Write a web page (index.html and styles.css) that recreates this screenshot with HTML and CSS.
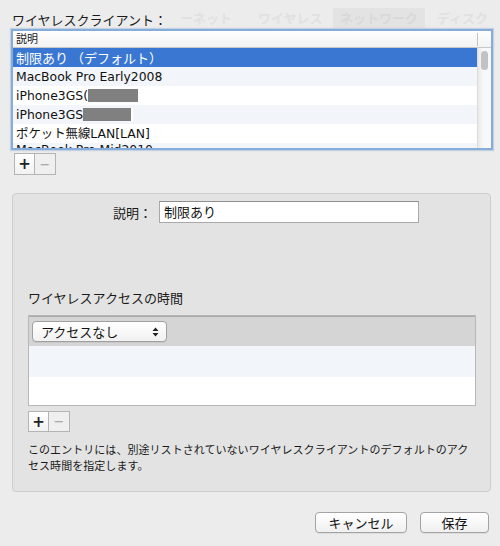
FILE: index.html
```html
<!DOCTYPE html>
<html lang="ja">
<head>
<meta charset="utf-8">
<link rel="stylesheet" href="styles.css">
</head>
<body>
<div class="ghost" aria-hidden="true">
  <div class="ghost-tabs">
    <span class="gt gt1">ーネット</span>
    <span class="gt gt2">ワイヤレス</span>
    <span class="gt gt3">ネットワーク</span>
    <span class="gt gt4">ディスク</span>
  </div>
</div>
<div class="sheet">
  <div class="title">ワイヤレスクライアント：</div>
  <div class="list">
    <div class="list-head">
      <span class="head-cell">説明</span>
      <span class="head-corner"></span>
    </div>
    <div class="list-body">
      <div class="rows">
        <div class="row sel">制限あり （デフォルト）</div>
        <div class="row alt">MacBook Pro Early2008</div>
        <div class="row">iPhone3GS(<span class="mask m1"></span></div>
        <div class="row alt">iPhone3GS<span class="mask m2"></span></div>
        <div class="row">ポケット無線LAN[LAN]</div>
        <div class="row alt cut">MacBook Pro Mid2010</div>
      </div>
      <div class="scroll"><div class="thumb"></div></div>
    </div>
  </div>
  <div class="pm pm-top">
    <span class="pmb plus">+</span><span class="pmb minus">−</span>
  </div>

  <div class="group">
    <div class="field-row">
      <span class="field-label">説明：</span>
      <span class="field">制限あり</span>
    </div>
    <div class="section-label">ワイヤレスアクセスの時間</div>
    <div class="table">
      <div class="table-head">
        <span class="popup">アクセスなし
          <svg class="arrows" width="7" height="10" viewBox="0 0 7 10"><path d="M3.5 0.5 L6.5 4 L0.5 4 Z M0.5 6 L6.5 6 L3.5 9.5 Z" fill="#222"/></svg>
        </span>
      </div>
      <div class="trow alt"></div>
      <div class="trow"></div>
    </div>
    <div class="pm pm-group">
      <span class="pmb plus">+</span><span class="pmb minus">−</span>
    </div>
    <p class="note">このエントリには、別途リストされていないワイヤレスクライアントのデフォルトのアク<br>セス時間を指定します。</p>
  </div>

  <div class="actions">
    <span class="btn cancel">キャンセル</span>
    <span class="btn save">保存</span>
  </div>
</div>
</body>
</html>
```
FILE: styles.css
```css
* { box-sizing: border-box; }
html, body { margin: 0; padding: 0; }
body {
  width: 500px;
  height: 546px;
  background: #ececec;
  font-family: "DejaVu Sans", "Noto Sans CJK JP", sans-serif;
  font-size: 13px;
  color: #111;
  position: relative;
  overflow: hidden;
}

/* faint window beneath the sheet */
.ghost {
  position: absolute;
  left: 0; top: 0;
  width: 500px;
  height: 546px;
  z-index: 0;
}
.ghost-tabs {
  display: flex;
  padding: 8px 0 0 180px;
  font-family: "Noto Sans CJK JP", sans-serif;
  font-size: 13px;
  font-weight: bold;
  color: #e1e1e1;
}
.gt { height: 20px; line-height: 20px; white-space: nowrap; }
.gt1 { width: 78px; }
.gt2 { width: 75px; }
.gt3 { width: 92px; background: #e3e3e3; text-align: center; color: #d9d9d9; }
.gt4 { padding-left: 12px; }

.sheet {
  position: relative;
  z-index: 1;
  padding: 11px 0 0 11px;
  width: 500px;
}
.title {
  font-family: "Noto Sans CJK JP", sans-serif;
  font-size: 13px;
  line-height: 18px;
  height: 18px;
  padding-left: 1px;
  color: #1a1a1a;
  width: 160px;
}

.list {
  width: 482px;
  height: 121px;
  border: 2px solid #86acd9;
  background: #fff;
  display: flex;
  flex-direction: column;
  overflow: hidden;
  box-shadow: 0 0 1px 1px rgba(120,160,210,0.35);
}
.list-head {
  height: 17px;
  flex: none;
  display: flex;
  background: linear-gradient(#ffffff, #f3f3f3);
  border-bottom: 1px solid #c9c9c9;
  font-family: "Noto Sans CJK JP", sans-serif;
  font-size: 11px;
  line-height: 15px;
}
.head-cell { flex: 1; padding-left: 3px; color: #222; }
.head-corner { width: 14px; border-left: 1px solid #c4c4c4; margin: 2px 0 1px; }
.list-body { flex: 1; display: flex; overflow: hidden; }
.rows { flex: 1; overflow: hidden; }
.row {
  height: 19px;
  line-height: 19px;
  padding-left: 3px;
  font-family: "DejaVu Sans", "Noto Sans CJK JP", sans-serif;
  font-size: 12.4px;
  white-space: nowrap;
  display: flex;
  align-items: center;
}
.row.sel {
  background: #3a77d3;
  color: #fff;
  font-family: "Noto Sans CJK JP", sans-serif;
  font-size: 13px;
}
.row.alt { background: #f2f5f9; }
.row.cut { height: 7px; align-items: flex-start; line-height: 14px; overflow: hidden; }
.mask {
  display: inline-block;
  height: 13px;
  background: #808080;
  border-right: 2px solid #fff;
}
.m1 { width: 52px; }
.m2 { width: 50px; }
.scroll {
  width: 14px;
  flex: none;
  background: linear-gradient(90deg, #e9e9e9, #f8f8f8 40%, #f8f8f8);
  border-left: 1px solid #dcdcdc;
  padding: 3px 0 0 3px;
}
.thumb {
  width: 7px;
  height: 19px;
  border-radius: 4px;
  background: #c2c2c2;
}

.pm { display: flex; }
.pm-top { margin: 3px 0 0 3px; }
.pmb {
  width: 21px;
  height: 22px;
  border: 1px solid #b4b4b4;
  background: linear-gradient(#ffffff, #f2f2f2);
  display: flex;
  align-items: center;
  justify-content: center;
  font-family: "DejaVu Sans", sans-serif;
  font-size: 15px;
  font-weight: bold;
  color: #222;
}
.pmb.minus {
  border-left: none;
  background: #efefef;
  color: #9a9a9a;
  font-weight: normal;
  font-size: 13px;
}

.group {
  margin: 18px 0 0 1px;
  width: 479px;
  height: 299px;
  background: #e3e3e3;
  border: 1px solid #cdcdcd;
  border-radius: 4px;
  padding: 7px 0 0 15px;
}
.field-row {
  display: flex;
  align-items: center;
  height: 22px;
}
.field-label {
  width: 131px;
  text-align: right;
  padding-right: 7px;
  font-family: "Noto Sans CJK JP", sans-serif;
  font-size: 13px;
  color: #1a1a1a;
}
.field {
  width: 260px;
  height: 22px;
  background: #fff;
  border: 1px solid #a9a9a9;
  border-top-color: #8f8f8f;
  font-family: "Noto Sans CJK JP", sans-serif;
  font-size: 13px;
  line-height: 20px;
  padding-left: 4px;
}
.section-label {
  margin-top: 67px;
  font-family: "Noto Sans CJK JP", sans-serif;
  font-size: 13px;
  line-height: 16px;
  color: #1a1a1a;
}
.table {
  margin-top: 9px;
  width: 448px;
  height: 91px;
  border: 1px solid #b8b8b8;
  background: #fff;
}
.table-head {
  height: 30px;
  background: #d5d5d5;
  border-top: 1px solid #a9a9a9;
  padding: 4px 0 0 3px;
}
.popup {
  width: 135px;
  height: 21px;
  display: flex;
  align-items: center;
  justify-content: space-between;
  padding: 0 7px 0 8px;
  border: 1px solid #a0a0a0;
  border-radius: 4px;
  background: linear-gradient(#ffffff, #f1f1f1);
  font-family: "Noto Sans CJK JP", sans-serif;
  font-size: 13px;
  color: #111;
  box-shadow: 0 1px 0 rgba(0,0,0,0.06);
}
.trow { height: 30px; }
.trow.alt { background: #f2f5f9; height: 31px; }
.pm-group { margin-top: 5px; }
.pm-group .pmb { height: 21px; }
.note {
  margin: 9px 0 0;
  font-family: "Noto Sans CJK JP", sans-serif;
  font-size: 11px;
  line-height: 16px;
  color: #1a1a1a;
  letter-spacing: 0.05px;
}

.actions {
  display: flex;
  justify-content: flex-end;
  gap: 13px;
  padding-right: 11px;
  margin-top: 20px;
}
.btn {
  height: 21px;
  border: 1px solid #a3a3a3;
  border-radius: 4px;
  background: linear-gradient(#ffffff, #f0f0f0);
  font-family: "Noto Sans CJK JP", sans-serif;
  font-size: 13px;
  display: flex;
  align-items: center;
  justify-content: center;
  color: #111;
  box-shadow: 0 1px 0 rgba(0,0,0,0.06);
}
.cancel { width: 92px; }
.save { width: 69px; }
```
